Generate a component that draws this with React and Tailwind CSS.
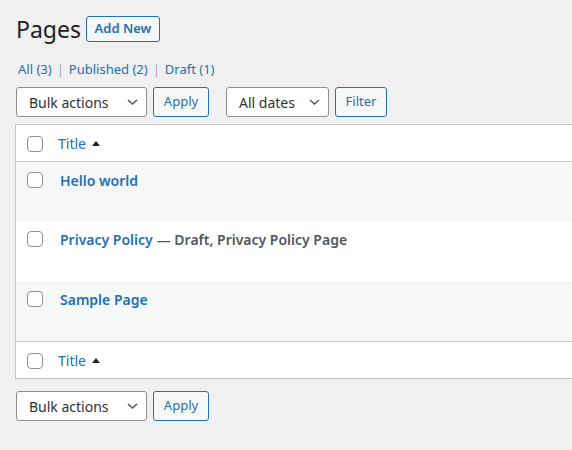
import React from 'react';

const Chevron = () => (
  <svg width="11" height="6" viewBox="0 0 11 6" className="text-[#50575e]">
    <polyline points="1,1 5.5,5 10,1" fill="none" stroke="currentColor" strokeWidth="1.5" />
  </svg>
);

const SortArrow = () => (
  <svg width="8" height="5" viewBox="0 0 8 5" className="ml-[6px]">
    <polygon points="0,5 4,0 8,5" fill="#1d2327" />
  </svg>
);

const Checkbox = ({ className = '' }) => (
  <div className={`h-4 w-4 shrink-0 rounded-[4px] border border-[#8c8f94] bg-white ${className}`} />
);

const Select = ({ label, width }) => (
  <div className={`flex h-[30px] items-center justify-between rounded-[3px] border border-[#8c8f94] bg-white pl-[12px] pr-[8px] text-[14px] text-[#2c3338] ${width}`}>
    <span>{label}</span>
    <Chevron />
  </div>
);

const Button = ({ label, width }) => (
  <div className={`flex h-[30px] items-center justify-center rounded-[3px] border border-[#2271b1] bg-[#f6f7f7] text-[13px] text-[#2271b1] ${width}`}>
    {label}
  </div>
);

const rows = [
  { title: 'Hello world', h: 'h-[59px]', bg: 'bg-[#f6f7f7]' },
  { title: 'Privacy Policy', state: 'Draft, Privacy Policy Page', h: 'h-[60px]', bg: 'bg-white' },
  { title: 'Sample Page', h: 'h-[60px]', bg: 'bg-[#f6f7f7]' },
];

const App = () => {
  return (
    <div className="h-[450px] w-[572px] overflow-hidden bg-[#f0f0f1] font-['Noto_Sans',sans-serif] text-[#1d2327]">
      {/* heading */}
      <div className="flex items-center pl-[16px] pt-[16px]">
        <h1 className="text-[23px] leading-[26px] font-normal">Pages</h1>
        <div className="ml-[5px] flex h-[26px] w-[74px] items-center justify-center rounded-[3px] border border-[#2271b1] bg-[#f6f7f7] text-[13px] font-semibold text-[#2271b1]">
          Add New
        </div>
      </div>

      {/* status links */}
      <div className="mt-[17px] flex items-center pl-[18px] text-[13px] leading-[20px] text-[#2271b1]">
        <span>All (3)</span>
        <span className="mx-[5px] text-[#a7aaad]">|</span>
        <span>Published (2)</span>
        <span className="mx-[5px] text-[#a7aaad]">|</span>
        <span>Draft (1)</span>
      </div>

      {/* top actions */}
      <div className="mt-[8px] flex items-center pl-[16px]">
        <Select label="Bulk actions" width="w-[131px]" />
        <div className="ml-[6px]"><Button label="Apply" width="w-[56px]" /></div>
        <div className="ml-[17px]"><Select label="All dates" width="w-[103px]" /></div>
        <div className="ml-[6px]"><Button label="Filter" width="w-[52px]" /></div>
      </div>

      {/* table */}
      <div className="ml-[15px] mt-[7px] border-y border-l border-[#c3c4c7] bg-white">
        <div className="flex h-[37px] items-center border-b border-[#c3c4c7]">
          <div className="w-[42px] pl-[11px]"><Checkbox className="mt-[2px]" /></div>
          <span className="text-[14px] text-[#2271b1]">Title</span>
          <SortArrow />
        </div>
        {rows.map((r) => (
          <div key={r.title} className={`flex items-start pt-[10px] ${r.h} ${r.bg}`}>
            <div className="w-[42px] pl-[11px]"><Checkbox /></div>
            <div className="flex h-4 items-center pl-[2px] text-[14px] font-semibold">
              <span className="text-[#2271b1]">{r.title}</span>
              {r.state && <span className="ml-[4px] text-[#50575e]">— {r.state}</span>}
            </div>
          </div>
        ))}
        <div className="flex h-[37px] items-center border-t border-[#c3c4c7]">
          <div className="w-[42px] pl-[11px]"><Checkbox className="mt-[2px]" /></div>
          <span className="text-[14px] text-[#2271b1]">Title</span>
          <SortArrow />
        </div>
      </div>

      {/* bottom actions */}
      <div className="mt-[12px] flex items-center pl-[16px]">
        <Select label="Bulk actions" width="w-[131px]" />
        <div className="ml-[6px]"><Button label="Apply" width="w-[56px]" /></div>
      </div>
    </div>
  );
};

export default App;
